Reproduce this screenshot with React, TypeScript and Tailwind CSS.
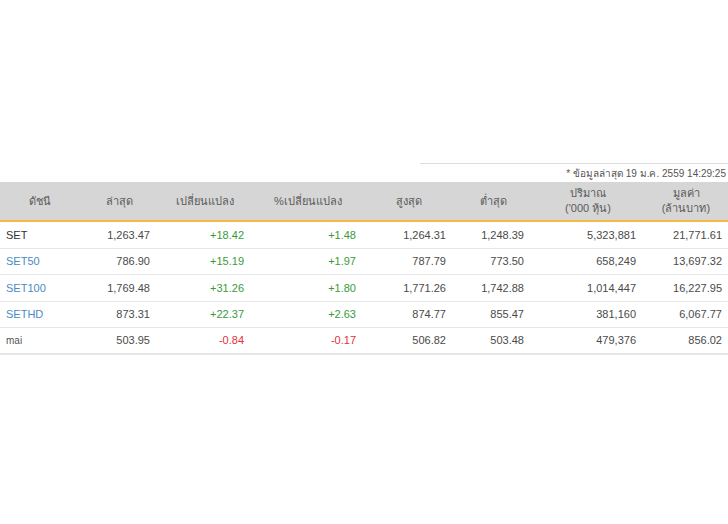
const rows = [
  ["SET", "1,263.47", "+18.42", "+1.48", "1,264.31", "1,248.39", "5,323,881", "21,771.61"],
  ["SET50", "786.90", "+15.19", "+1.97", "787.79", "773.50", "658,249", "13,697.32"],
  ["SET100", "1,769.48", "+31.26", "+1.80", "1,771.26", "1,742.88", "1,014,447", "16,227.95"],
  ["SETHD", "873.31", "+22.37", "+2.63", "874.77", "855.47", "381,160", "6,067.77"],
  ["mai", "503.95", "-0.84", "-0.17", "506.82", "503.48", "479,376", "856.02"],
];
const grid = "grid grid-cols-[80px_78px_94px_112px_90px_78px_112px_84px]";
export default function App() {
  return (
    <div className="w-[728px] h-[524px] bg-white text-[11px] text-[#4a4a4a]" style={{ fontFamily: "Arial, 'Liberation Sans', 'Noto Sans', sans-serif" }}>
      <div className="h-[163px]" />
      <div className="ml-[420px] h-px bg-[#ddd]" />
      <div className="h-[18px] flex items-center justify-end pr-[2px] text-[10px] text-[#555]">* ข้อมูลล่าสุด 19 ม.ค. 2559 14:29:25</div>
      <div className={`${grid} h-[40px] bg-[#d6d6d6] text-[#5a5a5a] border-b-2 border-[#f5b945] items-center text-center leading-[15px]`}>
        <div>ดัชนี</div><div>ล่าสุด</div><div>เปลี่ยนแปลง</div><div>%เปลี่ยนแปลง</div>
        <div>สูงสุด</div><div>ต่ำสุด</div><div>ปริมาณ<br />('000 หุ้น)</div><div>มูลค่า<br />(ล้านบาท)</div>
      </div>
      {rows.map((r, i) => (
        <div key={i} className={`${grid} h-[26.5px] items-center border-b border-[#e6e6e6] ${i === 4 ? "border-b-2 border-[#ddd]" : ""}`}>
          <div className={`pl-[6px] ${i === 0 ? "text-[#333]" : i === 4 ? "text-[#555] text-[10px]" : "text-[#4a8ac4]"}`}>{r[0]}</div>
          {r.slice(1).map((c, j) => (
            <div key={j} className={`text-right ${j === 6 ? "pr-[6px]" : "pr-[8px]"} ${(j === 1 || j === 2) ? (c.startsWith("-") ? "text-[#e0323a]" : "text-[#3a9a3a]") : ""}`}>{c}</div>
          ))}
        </div>
      ))}
    </div>
  );
}
